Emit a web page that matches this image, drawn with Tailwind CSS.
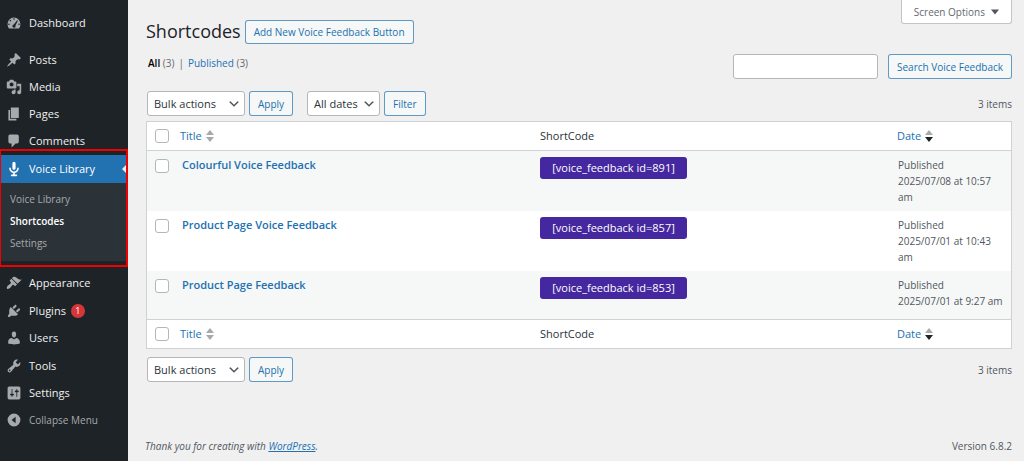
<!DOCTYPE html>
<html lang="en">
<head>
<meta charset="utf-8">
<meta name="viewport" content="width=device-width, initial-scale=1">
<title>Shortcodes</title>
<script src="https://cdn.jsdelivr.net/npm/@tailwindcss/browser@4"></script>
</head>
<body class="flex min-h-screen bg-[#f0f0f1] font-['Open_Sans','Noto_Sans',sans-serif] text-[11px] leading-4 text-[#50575e]">

<!-- Icon sprite -->
<svg class="hidden" aria-hidden="true">
  <symbol id="i-dashboard" viewBox="0 0 20 20"><path fill-rule="evenodd" d="M3.760 17h12.480A9.900 9.900 0 0 0 18 11.500C18 6.800 14.400 3 10 3s-8 3.800-8 8.500c0 2.040.66 3.950 1.760 5.500zM10 4a1 1 0 1 1 0 2 1 1 0 0 1 0-2zM5.500 6.200a1 1 0 1 1 0 2 1 1 0 0 1 0-2zM14 6.500l.9.700-3.100 5.900c.1.300.2.600.2.900a2 2 0 1 1-2.300-2zM3.700 10.500a1 1 0 1 1 0 2 1 1 0 0 1 0-2zm12.600 0a1 1 0 1 1 0 2 1 1 0 0 1 0-2z"/></symbol>
  <symbol id="i-post" viewBox="0 0 20 20"><path d="M10.440 3.020l1.820-1.820 6.360 6.350-1.830 1.820c-1.050-.68-2.480-.57-3.410.36l-.75.75c-.92.93-1.040 2.350-.35 3.410l-1.830 1.820-2.410-2.410-2.800 2.790c-.42.42-3.380 2.710-3.800 2.290s1.860-3.390 2.280-3.810l2.790-2.790L4.100 9.360l1.830-1.820c1.050.69 2.480.57 3.400-.36l.75-.75c.93-.92 1.050-2.350.36-3.410z"/></symbol>
  <symbol id="i-media" viewBox="0 0 20 20"><path fill-rule="evenodd" d="M13 11V4c0-.55-.45-1-1-1h-1.670L9 1H5L3.670 3H2c-.55 0-1 .45-1 1v7c0 .55.45 1 1 1h10c.55 0 1-.45 1-1zM7 4.500c1.380 0 2.500 1.120 2.500 2.500S8.380 9.500 7 9.500 4.500 8.380 4.500 7 5.620 4.500 7 4.500zM14 6h5v10.500c0 1.380-1.120 2.500-2.500 2.500S14 17.880 14 16.500s1.120-2.500 2.500-2.500c.17 0 .34.020.5.050V9h-3V6zm-4 8.050V13h2v3.500c0 1.380-1.120 2.500-2.500 2.500S7 17.880 7 16.500 8.120 14 9.500 14c.17 0 .34.020.5.050z"/></symbol>
  <symbol id="i-page" viewBox="0 0 20 20"><path d="M6 15V2h10v13H6zm-1 1h8v2H3V5h2v11z"/></symbol>
  <symbol id="i-comment" viewBox="0 0 20 20"><path d="M5 2h9c1.100 0 2 .9 2 2v7c0 1.100-.9 2-2 2h-2l-5 5v-5H5c-1.100 0-2-.9-2-2V4c0-1.100.9-2 2-2z"/></symbol>
  <symbol id="i-mic" viewBox="0 0 20 20"><path d="M12 9V3c0-1.100-.89-2-2-2-1.120 0-2 .94-2 2v6c0 1.100.9 2 2 2 1.130 0 2-.94 2-2zm4 0c0 2.970-2.160 5.430-5 5.910V17h2c.56 0 1 .45 1 1s-.44 1-1 1H7c-.55 0-1-.45-1-1s.45-1 1-1h2v-2.090C6.170 14.430 4 11.970 4 9c0-.55.45-1 1-1 .56 0 1 .45 1 1 0 2.210 1.800 4 4 4 2.210 0 4-1.790 4-4 0-.55.45-1 1-1 .56 0 1 .45 1 1z"/></symbol>
  <symbol id="i-appearance" viewBox="0 0 20 20"><path d="M14.480 11.060L7.410 3.990l1.500-1.500c.5-.56 2.300-.47 3.510.32 1.210.8 1.430 1.280 2.910 2.100 1.180.64 2.450 1.260 4.450.85zm-.71.71L6.700 4.700 4.930 6.470c-.39.39-.39 1.020 0 1.410l1.060 1.060c.39.39.39 1.030 0 1.420-.6.600-1.430 1.110-2.210 1.690-.35.260-.7.530-1.010.84C1.430 14.230.4 16.080 1.400 17.070c.99 1 2.840-.03 4.180-1.360.31-.31.580-.66.850-1.020.57-.78 1.080-1.610 1.690-2.210.39-.39 1.020-.39 1.410 0l1.060 1.060c.39.39 1.020.39 1.410 0z"/></symbol>
  <symbol id="i-plugin" viewBox="0 0 20 20"><path d="M13.110 4.360L9.870 7.600 8 5.730l3.240-3.240c.35-.34 1.050-.2 1.560.32.520.51.660 1.210.310 1.550zm-8 1.770l.91-1.120 9.010 9.010-1.190.84c-.71.71-2.630 1.160-3.820 1.160H6.140L4.900 17.260c-.59.590-1.540.590-2.120 0-.59-.58-.59-1.530 0-2.120l1.240-1.240v-3.880c0-1.130.4-3.190 1.090-3.890zm7.260 3.970l3.240-3.240c.34-.35 1.040-.21 1.550.31.520.51.660 1.210.31 1.550l-3.240 3.250z"/></symbol>
  <symbol id="i-users" viewBox="0 0 20 20"><path d="M10 9.250c-2.270 0-2.730-3.440-2.730-3.440C7 4.020 7.820 2 9.970 2c2.160 0 2.980 2.020 2.710 3.810 0 0-.41 3.440-2.680 3.440zm0 2.570L12.720 10c2.390 0 4.520 2.330 4.520 4.530v2.490s-3.650 1.130-7.240 1.130c-3.650 0-7.240-1.130-7.240-1.130v-2.490c0-2.250 1.940-4.480 4.470-4.480z"/></symbol>
  <symbol id="i-tools" viewBox="0 0 20 20"><path d="M16.680 9.770c-1.340 1.340-3.300 1.670-4.950.99l-5.410 6.520c-.99.990-2.590.990-3.580 0s-.99-2.590 0-3.570l6.520-5.420c-.68-1.650-.35-3.610.99-4.950 1.280-1.280 3.120-1.620 4.720-1.060l-2.890 2.890 2.820 2.820 2.860-2.870c.53 1.580.18 3.390-1.080 4.650zM3.810 16.210c.4.390 1.040.390 1.430 0 .4-.4.400-1.040 0-1.430-.39-.4-1.030-.4-1.430 0-.39.390-.39 1.030 0 1.430z"/></symbol>
  <symbol id="i-settings" viewBox="0 0 20 20"><path fill-rule="evenodd" d="M18 16V4c0-1.100-.9-2-2-2H4c-1.100 0-2 .9-2 2v12c0 1.100.9 2 2 2h12c1.100 0 2-.9 2-2zM8 11h1c.55 0 1 .45 1 1s-.45 1-1 1H8v1.500c0 .28-.22.5-.5.5s-.5-.22-.5-.5V13H6c-.55 0-1-.45-1-1s.45-1 1-1h1V5.500c0-.28.22-.5.5-.5s.5.220.5.500V11zm5-2h-1c-.55 0-1-.45-1-1s.45-1 1-1h1V5.500c0-.28.220-.5.500-.5s.5.220.5.500V7h1c.55 0 1 .45 1 1s-.45 1-1 1h-1v5.500c0 .280-.220.500-.500.500s-.500-.220-.500-.500V9z"/></symbol>
  <symbol id="i-collapse" viewBox="0 0 20 20"><path fill-rule="evenodd" d="M10 2a8 8 0 1 1 0 16 8 8 0 0 1 0-16zm2 4l-5 4 5 4z"/></symbol>
  <symbol id="i-chevron" viewBox="0 0 20 20"><path d="M5 6l5 5 5-5 2 1-7 7-7-7z"/></symbol>
  <symbol id="i-up" viewBox="0 0 8 5"><path d="M4 0l4 5H0z"/></symbol>
  <symbol id="i-down" viewBox="0 0 8 5"><path d="M0 0h8L4 5z"/></symbol>
</svg>

<nav aria-label="Main menu" class="w-32 shrink-0 bg-[#1d2327] pt-[9px] text-[#f0f0f1]">
  <ul>
    <li><a href="#" class="flex h-[27px] items-center gap-[7px] pl-[6px]"><svg class="size-4 fill-[#a7aaad]"><use href="#i-dashboard"/></svg>Dashboard</a></li>
    <li class="mt-[10px]"><a href="#" class="flex h-[27px] items-center gap-[7px] pl-[6px]"><svg class="size-4 fill-[#a7aaad]"><use href="#i-post"/></svg>Posts</a></li>
    <li><a href="#" class="flex h-[27px] items-center gap-[7px] pl-[6px]"><svg class="size-4 fill-[#a7aaad]"><use href="#i-media"/></svg>Media</a></li>
    <li><a href="#" class="flex h-[27px] items-center gap-[7px] pl-[6px]"><svg class="size-4 fill-[#a7aaad]"><use href="#i-page"/></svg>Pages</a></li>
    <li><a href="#" class="flex h-7 items-center gap-[7px] pl-[6px]"><svg class="size-4 fill-[#a7aaad]"><use href="#i-comment"/></svg>Comments</a></li>
    <li class="relative">
      <a href="#" class="flex h-7 items-center gap-[7px] bg-[#2271b1] pl-[6px] text-white"><svg class="size-4 fill-white"><use href="#i-mic"/></svg>Voice Library<svg class="ml-auto h-3 w-[6px] fill-[#f0f0f1]" viewBox="0 0 6 12"><path d="M6 0v12L0 6z"/></svg></a>
      <ul class="bg-[#2c3338] pt-[5px] pb-[7px] text-[10px] text-[#a7aaad]">
        <li><a href="#" class="flex h-[22px] items-center pl-[10px]">Voice Library</a></li>
        <li><a href="#" class="flex h-[22px] items-center pl-[10px] font-semibold text-white" aria-current="page">Shortcodes</a></li>
        <li><a href="#" class="flex h-[22px] items-center pl-[10px]">Settings</a></li>
      </ul>
      <div class="pointer-events-none absolute inset-x-0 -top-[6px] -bottom-[6px] border-2 border-l-1 border-[#f00000]"></div>
    </li>
    <li class="mt-2"><a href="#" class="flex h-7 items-center gap-[7px] pl-[6px]"><svg class="size-4 fill-[#a7aaad]"><use href="#i-appearance"/></svg>Appearance</a></li>
    <li><a href="#" class="flex h-[27px] items-center gap-[7px] pl-[6px]"><svg class="size-4 fill-[#a7aaad]"><use href="#i-plugin"/></svg>Plugins<span class="-ml-[2px] flex size-[14px] items-center justify-center rounded-full bg-[#d63638] text-[9px] text-white">1</span></a></li>
    <li><a href="#" class="flex h-7 items-center gap-[7px] pl-[6px]"><svg class="size-4 fill-[#a7aaad]"><use href="#i-users"/></svg>Users</a></li>
    <li><a href="#" class="flex h-[27px] items-center gap-[7px] pl-[6px]"><svg class="size-4 fill-[#a7aaad]"><use href="#i-tools"/></svg>Tools</a></li>
    <li><a href="#" class="flex h-[27px] items-center gap-[7px] pl-[6px]"><svg class="size-4 fill-[#a7aaad]"><use href="#i-settings"/></svg>Settings</a></li>
    <li><button type="button" class="flex h-7 w-full items-center gap-[7px] pl-[6px] text-[10px] text-[#a7aaad]"><svg class="size-4 fill-[#a7aaad]"><use href="#i-collapse"/></svg>Collapse Menu</button></li>
  </ul>
</nav>

<main class="flex min-w-0 grow flex-col pr-3 pl-[18px]">
  <header class="flex items-start">
    <h1 class="mt-[19px] text-[18px] leading-6 text-[#1d2327]">Shortcodes</h1>
    <a href="#" class="mt-5 ml-1 flex h-6 items-center rounded-[3px] border border-[#2271b1]/70 bg-[#f6f7f7] px-2 text-[10px] text-[#2271b1]">Add New Voice Feedback Button</a>
    <button type="button" class="ml-auto flex h-6 items-center gap-[6px] rounded-b-[3px] border border-t-0 border-[#c3c4c7] bg-white px-3 text-[10px] text-[#646970]">Screen Options<svg class="h-[6px] w-[8px] fill-[#50575e]"><use href="#i-down"/></svg></button>
  </header>

  <div class="mt-[10px] flex h-[25px] justify-between">
    <ul class="flex gap-1 pt-px pl-[2px] text-[10px] text-[#646970]">
      <li><a href="#"><b class="font-semibold text-black">All</b> (3)</a></li>
      <li>|</li>
      <li><a href="#"><span class="text-[#2271b1]">Published</span> (3)</a></li>
    </ul>
    <form class="flex gap-[10px]">
      <input type="search" aria-label="Search Voice Feedback" class="w-[145px] rounded-[3px] border border-[#b4b6b9] bg-white px-2">
      <button type="button" class="rounded-[3px] border border-[#2271b1]/70 bg-[#f6f7f7] px-2 text-[10px] text-[#2271b1]">Search Voice Feedback</button>
    </form>
  </div>

  <div class="mt-3 flex h-[25px] items-center pl-px">
    <div class="relative h-full"><select aria-label="Select bulk action" class="h-full w-[98px] appearance-none rounded-[3px] border border-[#b4b6b9] bg-white pl-[6px] text-[#2c3338]"><option>Bulk actions</option></select><svg class="pointer-events-none absolute top-[6px] right-1 size-[14px] fill-[#50575e]"><use href="#i-chevron"/></svg></div>
    <button type="button" class="ml-1 h-full rounded-[3px] border border-[#2271b1]/70 bg-[#f6f7f7] px-2 text-[10px] text-[#2271b1]">Apply</button>
    <div class="relative ml-[14px] h-full"><select aria-label="Filter by date" class="h-full w-[73px] appearance-none rounded-[3px] border border-[#b4b6b9] bg-white pl-[6px] text-[#2c3338]"><option>All dates</option></select><svg class="pointer-events-none absolute top-[6px] right-1 size-[14px] fill-[#50575e]"><use href="#i-chevron"/></svg></div>
    <button type="button" class="ml-1 h-full rounded-[3px] border border-[#2271b1]/70 bg-[#f6f7f7] px-2 text-[10px] text-[#2271b1]">Filter</button>
    <span class="ml-auto text-[10px]">3 items</span>
  </div>

  <table class="mt-[5px] w-full table-fixed border-separate border-spacing-0 border border-[#d0d1d4] bg-white text-left">
    <colgroup><col class="w-[33px]"><col class="w-5/12"><col><col class="w-[120px]"></colgroup>
    <thead class="text-[#2c3338]">
      <tr class="h-[29px]">
        <th class="border-b border-[#d0d1d4] pl-2"><input type="checkbox" aria-label="Select all" class="block size-[14px] appearance-none rounded-[3px] border border-[#b4b6b9] bg-white"></th>
        <th class="border-b border-[#d0d1d4] font-normal"><a href="#" class="flex items-center gap-1 text-[#2271b1]">Title<span class="flex flex-col gap-[2px] fill-[#a7aaad]"><svg class="h-[5px] w-[8px]"><use href="#i-up"/></svg><svg class="h-[5px] w-[8px]"><use href="#i-down"/></svg></span></a></th>
        <th class="border-b border-[#d0d1d4] font-normal">ShortCode</th>
        <th class="border-b border-[#d0d1d4] pl-[6px] font-normal"><a href="#" class="flex items-center gap-1 text-[#2271b1]">Date<span class="flex flex-col gap-[2px]"><svg class="h-[5px] w-[8px] fill-[#a7aaad]"><use href="#i-up"/></svg><svg class="h-[5px] w-[8px] fill-[#1d2327]"><use href="#i-down"/></svg></span></a></th>
      </tr>
    </thead>
    <tbody class="align-top">
      <tr class="h-[60px] bg-[#f6f7f7]">
        <td class="pt-2 pl-2"><input type="checkbox" aria-label="Select Colourful Voice Feedback" class="block size-[14px] appearance-none rounded-[3px] border border-[#b4b6b9] bg-white"></td>
        <td class="pt-[6px] pl-[2px]"><a href="#" class="font-semibold text-[#2271b1]">Colourful Voice Feedback</a></td>
        <td class="pt-[6px]"><button type="button" class="h-[22px] w-[147px] rounded-[3px] bg-[#4527a0] text-white">[voice_feedback id=891]</button></td>
        <td class="pt-[6px] pr-2 pl-[7px] text-[10px]">Published<br>2025/07/08 at 10:57 am</td>
      </tr>
      <tr class="h-[60px]">
        <td class="pt-2 pl-2"><input type="checkbox" aria-label="Select Product Page Voice Feedback" class="block size-[14px] appearance-none rounded-[3px] border border-[#b4b6b9] bg-white"></td>
        <td class="pt-[6px] pl-[2px]"><a href="#" class="font-semibold text-[#2271b1]">Product Page Voice Feedback</a></td>
        <td class="pt-[6px]"><button type="button" class="h-[22px] w-[147px] rounded-[3px] bg-[#4527a0] text-white">[voice_feedback id=857]</button></td>
        <td class="pt-[6px] pr-2 pl-[7px] text-[10px]">Published<br>2025/07/01 at 10:43 am</td>
      </tr>
      <tr class="h-12 bg-[#f6f7f7]">
        <td class="pt-2 pl-2"><input type="checkbox" aria-label="Select Product Page Feedback" class="block size-[14px] appearance-none rounded-[3px] border border-[#b4b6b9] bg-white"></td>
        <td class="pt-[6px] pl-[2px]"><a href="#" class="font-semibold text-[#2271b1]">Product Page Feedback</a></td>
        <td class="pt-[6px]"><button type="button" class="h-[22px] w-[147px] rounded-[3px] bg-[#4527a0] text-white">[voice_feedback id=853]</button></td>
        <td class="pt-[6px] pr-2 pl-[7px] text-[10px]">Published<br>2025/07/01 at 9:27 am</td>
      </tr>
    </tbody>
    <tfoot class="text-[#2c3338]">
      <tr class="h-[29px]">
        <th class="border-t border-[#d0d1d4] pl-2"><input type="checkbox" aria-label="Select all" class="block size-[14px] appearance-none rounded-[3px] border border-[#b4b6b9] bg-white"></th>
        <th class="border-t border-[#d0d1d4] font-normal"><a href="#" class="flex items-center gap-1 text-[#2271b1]">Title<span class="flex flex-col gap-[2px] fill-[#a7aaad]"><svg class="h-[5px] w-[8px]"><use href="#i-up"/></svg><svg class="h-[5px] w-[8px]"><use href="#i-down"/></svg></span></a></th>
        <th class="border-t border-[#d0d1d4] font-normal">ShortCode</th>
        <th class="border-t border-[#d0d1d4] pl-[6px] font-normal"><a href="#" class="flex items-center gap-1 text-[#2271b1]">Date<span class="flex flex-col gap-[2px]"><svg class="h-[5px] w-[8px] fill-[#a7aaad]"><use href="#i-up"/></svg><svg class="h-[5px] w-[8px] fill-[#1d2327]"><use href="#i-down"/></svg></span></a></th>
      </tr>
    </tfoot>
  </table>

  <div class="mt-2 flex h-[25px] items-center pl-px">
    <div class="relative h-full"><select aria-label="Select bulk action" class="h-full w-[98px] appearance-none rounded-[3px] border border-[#b4b6b9] bg-white pl-[6px] text-[#2c3338]"><option>Bulk actions</option></select><svg class="pointer-events-none absolute top-[6px] right-1 size-[14px] fill-[#50575e]"><use href="#i-chevron"/></svg></div>
    <button type="button" class="ml-1 h-full rounded-[3px] border border-[#2271b1]/70 bg-[#f6f7f7] px-2 text-[10px] text-[#2271b1]">Apply</button>
    <span class="ml-auto text-[10px]">3 items</span>
  </div>

  <footer class="mt-auto flex justify-between pb-[7px] text-[10px]">
    <p class="-ml-px italic">Thank you for creating with <a href="#" class="text-[#2271b1] underline">WordPress</a>.</p>
    <p>Version 6.8.2</p>
  </footer>
</main>
</body>
</html>
